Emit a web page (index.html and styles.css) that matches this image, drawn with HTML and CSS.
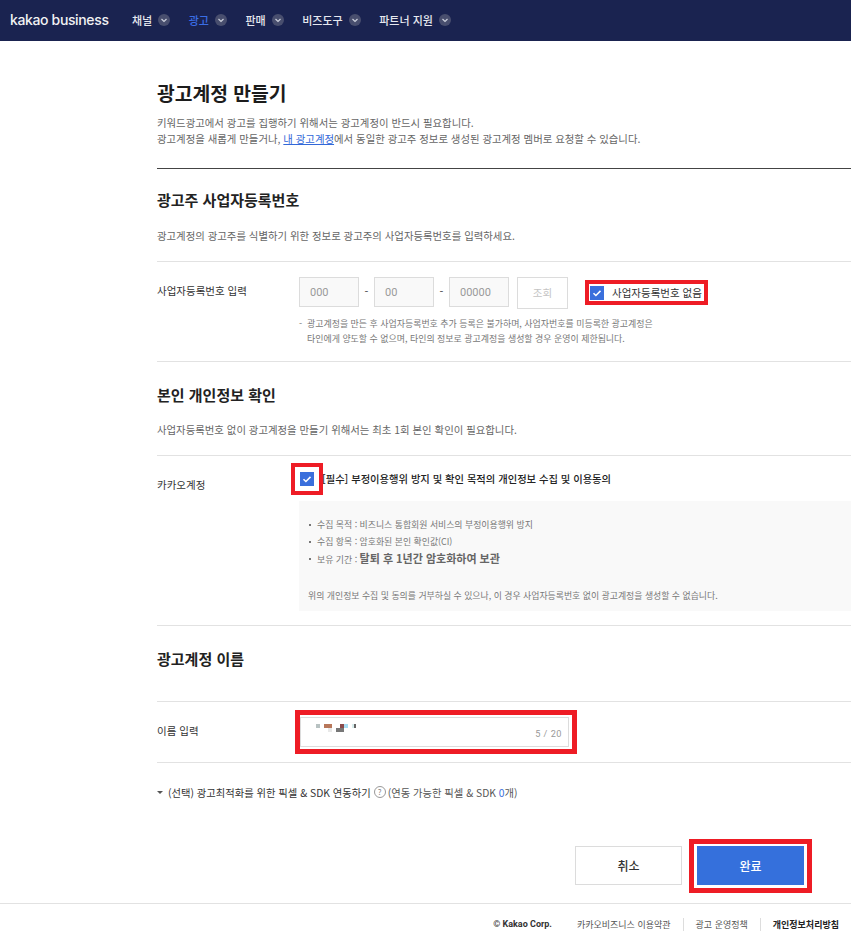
FILE: index.html
```html
<!DOCTYPE html>
<html lang="ko">
<head>
    <meta charset="UTF-8">
    <title>광고계정 만들기</title>
    <link rel="stylesheet" href="styles.css">
</head>
<body>
    <header class="gnb">
        <span class="logo">kakao business</span>
        <nav class="gnb-menu">
            <a class="gnb-item">채널<i class="arrow"><svg viewBox="0 0 12 12"><path d="M3.500 5l2.500 2.500L8.500 5"/></svg></i></a>
            <a class="gnb-item on">광고<i class="arrow"><svg viewBox="0 0 12 12"><path d="M3.500 5l2.500 2.500L8.500 5"/></svg></i></a>
            <a class="gnb-item">판매<i class="arrow"><svg viewBox="0 0 12 12"><path d="M3.500 5l2.500 2.500L8.500 5"/></svg></i></a>
            <a class="gnb-item">비즈도구<i class="arrow"><svg viewBox="0 0 12 12"><path d="M3.500 5l2.500 2.500L8.500 5"/></svg></i></a>
            <a class="gnb-item">파트너 지원<i class="arrow"><svg viewBox="0 0 12 12"><path d="M3.500 5l2.500 2.500L8.500 5"/></svg></i></a>
        </nav>
    </header>

    <main class="content">
        <div class="intro">
            <h1>광고계정 만들기</h1>
            <p>키워드광고에서 광고를 집행하기 위해서는 광고계정이 반드시 필요합니다.<br>광고계정을 새롭게 만들거나, <a class="link">내 광고계정</a>에서 동일한 광고주 정보로 생성된 광고계정 멤버로 요청할 수 있습니다.</p>
        </div>

        <!-- 사업자등록번호 -->
        <section class="sec-head sec-first">
            <h2>광고주 사업자등록번호</h2>
            <p>광고계정의 광고주를 식별하기 위한 정보로 광고주의 사업자등록번호를 입력하세요.</p>
        </section>
        <div class="row row-biz">
            <div class="row-label">사업자등록번호 입력</div>
            <div class="row-body">
                <div class="biz-line">
                    <span class="biz-input w60">000</span><span class="dash">-</span>
                    <span class="biz-input w60">00</span><span class="dash">-</span>
                    <span class="biz-input w60">00000</span>
                    <span class="biz-btn">조회</span>
                    <label class="mark mark-biz">
                        <i class="check"><svg viewBox="0 0 14 14"><path d="M3.500 7.200l2.400 2.300 4.600-4.600"/></svg></i>
                        <span>사업자등록번호 없음</span>
                    </label>
                </div>
                <p class="biz-note">광고계정을 만든 후 사업자등록번호 추가 등록은 불가하며, 사업자번호를 미등록한 광고계정은<br>타인에게 양도할 수 없으며, 타인의 정보로 광고계정을 생성할 경우 운영이 제한됩니다.</p>
            </div>
        </div>

        <!-- 본인 확인 -->
        <section class="sec-head">
            <h2>본인 개인정보 확인</h2>
            <p>사업자등록번호 없이 광고계정을 만들기 위해서는 최초 1회 본인 확인이 필요합니다.</p>
        </section>
        <div class="row row-agree">
            <div class="row-label label-agree">카카오계정</div>
            <div class="row-body">
                <div class="agree-line">
                    <span class="mark mark-agree"><i class="check"><svg viewBox="0 0 14 14"><path d="M3.500 7.200l2.400 2.300 4.600-4.600"/></svg></i></span>
                    <strong>[필수] 부정이용행위 방지 및 확인 목적의 개인정보 수집 및 이용동의</strong>
                </div>
                <div class="agree-box">
                    <ul>
                        <li>수집 목적 : 비즈니스 통합회원 서비스의 부정이용행위 방지</li>
                        <li>수집 항목 : 암호화된 본인 확인값(CI)</li>
                        <li>보유 기간 : <b>탈퇴 후 1년간 암호화하여 보관</b></li>
                    </ul>
                    <p>위의 개인정보 수집 및 동의를 거부하실 수 있으나, 이 경우 사업자등록번호 없이 광고계정을 생성할 수 없습니다.</p>
                </div>
            </div>
        </div>

        <!-- 계정 이름 -->
        <section class="sec-head sec-name">
            <h2>광고계정 이름</h2>
        </section>
        <div class="row row-name">
            <div class="row-label label-name">이름 입력</div>
            <div class="row-body">
                <div class="mark mark-name">
                    <div class="name-input">
                        <span class="blur"><i class="b1"></i><i class="b2"></i><i class="b3"></i><i class="b4"></i><i class="b5"></i><i class="b6"></i><i class="b7"></i><i class="b8"></i></span>
                        <span class="count">5 / 20</span>
                    </div>
                </div>
            </div>
        </div>

        <div class="pixel">
            <i class="tri"></i>
            <span>(선택) 광고최적화를 위한 픽셀 &amp; SDK 연동하기</span>
            <i class="help">?</i>
            <span class="pixel-sub">(연동 가능한 픽셀 &amp; SDK <em>0</em>개)</span>
        </div>

        <div class="btns">
            <button class="btn">취소</button>
            <span class="mark mark-done"><button class="btn btn-done">완료</button></span>
        </div>
    </main>

    <footer class="foot">
        <span class="copy">© Kakao Corp.</span>
        <a>카카오비즈니스 이용약관</a>
        <a class="sep">광고 운영정책</a>
        <a class="sep strong">개인정보처리방침</a>
    </footer>
</body>
</html>
```

FILE: styles.css
```css
* {
    box-sizing: border-box;
}

body {
    margin: 0;
    font-family: "Noto Sans CJK KR", "Noto Sans", sans-serif;
    color: #222;
    background: #fff;
}

h1, h2, p, ul {
    margin: 0;
    padding: 0;
}

/* Top bar */
.gnb {
    display: flex;
    align-items: center;
    height: 41px;
    padding-left: 10px;
    padding-bottom: 2px;
    background: #1a2350;
    color: #e6e8ef;
}

.logo {
    width: 122px;
    font-family: Inter, sans-serif;
    font-size: 14px;
    font-weight: 500;
    letter-spacing: -0.36px;
    color: #f1f1f3;
}

.gnb-menu {
    display: flex;
    gap: 18.5px;
}

.gnb-item {
    display: flex;
    align-items: center;
    gap: 6px;
    font-size: 11px;
    font-weight: 500;
}

.gnb-item.on {
    color: #3a6ee6;
}

.arrow {
    width: 12px;
    height: 12px;
    border-radius: 50%;
    background: #484e6e;
}

.arrow svg {
    display: block;
    fill: none;
    stroke: #ccd0dc;
    stroke-width: 1.2;
}

/* Page body */
.content {
    padding-left: 157px;
}

.intro {
    height: 128px;
    padding-top: 39px;
    border-bottom: 1px solid #444;
}

.intro h1 {
    font-size: 19.3px;
    line-height: 26px;
    font-weight: 700;
    color: #1c1c1c;
}

.intro p {
    margin-top: 9px;
    font-size: 10.4px;
    line-height: 16px;
    color: #666;
}

.link {
    color: #3268d8;
    text-decoration: underline;
}

.sec-head {
    height: 94px;
    padding-top: 23px;
    border-bottom: 1px solid #e2e2e2;
}

.sec-first {
    height: 93px;
    padding-top: 21px;
}

.sec-head h2 {
    font-size: 15px;
    line-height: 20px;
    font-weight: 700;
    color: #222;
}

.sec-head p {
    margin-top: 17px;
    font-size: 10.4px;
    line-height: 16px;
    color: #666;
}

.sec-first p {
    margin-top: 18px;
}

.sec-name {
    height: 76px;
}

.row {
    display: flex;
    border-bottom: 1px solid #e2e2e2;
}

.row-label {
    width: 142px;
    flex: none;
    font-size: 10.5px;
    line-height: 16px;
    color: #333;
}

.row-body {
    flex: 1;
    min-width: 0;
}

/* Business number row */
.row-biz {
    height: 100px;
    padding-top: 15px;
}

.row-biz .row-label {
    padding-top: 6px;
}

.biz-line {
    display: flex;
    align-items: flex-start;
    height: 30px;
}

.biz-input {
    height: 30px;
    padding-left: 10px;
    border: 1px solid #dcdcdc;
    background: #f9f9f9;
    font-family: Roboto, sans-serif;
    font-size: 11px;
    line-height: 29px;
    color: #999;
}

.w60 {
    width: 60px;
}

.dash {
    width: 15px;
    text-align: center;
    font-size: 11px;
    line-height: 28px;
    color: #444;
}

.biz-btn {
    width: 51px;
    height: 32px;
    margin-left: 8px;
    border: 1px solid #dcdcdc;
    text-align: center;
    font-size: 10.5px;
    line-height: 30px;
    color: #c4c4c4;
}

.mark {
    border: 4px solid #ee1c25;
    background: #fff;
}

.mark-biz {
    display: flex;
    align-items: center;
    gap: 8px;
    width: 123px;
    height: 25px;
    margin-top: 3px;
    margin-left: 17px;
    padding-left: 1px;
    font-size: 10.5px;
    color: #333;
}

.check {
    display: block;
    width: 14px;
    height: 14px;
    flex: none;
    background: #3a6fdc;
}

.check svg {
    display: block;
    fill: none;
    stroke: #fff;
    stroke-width: 1.5;
}

.biz-note {
    position: relative;
    margin-top: 10px;
    padding-left: 8px;
    font-size: 8.95px;
    line-height: 14.5px;
    color: #777;
}

.biz-note::before {
    content: "-";
    position: absolute;
    left: 0;
    top: 0;
}

/* Agreement row */
.row-agree {
    height: 170px;
}

.label-agree {
    padding-top: 21px;
}

.agree-line {
    display: flex;
    align-items: center;
    height: 45px;
    margin-left: -8px;
    font-size: 10.3px;
    color: #222;
}

.agree-line strong {
    padding-bottom: 1px;
    margin-left: -1px;
    font-weight: 500;
}

.mark-agree {
    display: flex;
    align-items: center;
    justify-content: center;
    width: 32px;
    height: 32px;
    margin-top: 1px;
    flex: none;
}

.agree-box {
    height: 110px;
    padding: 15px 9px 0 9px;
    background: #f9f9f9;
    font-size: 8.9px;
    color: #777;
    white-space: nowrap;
    overflow: hidden;
}

.agree-box ul {
    list-style: none;
}

.agree-box li {
    position: relative;
    padding-left: 9px;
    line-height: 17px;
}

.agree-box li::before {
    content: "";
    position: absolute;
    left: 1px;
    top: 8px;
    width: 2px;
    height: 2px;
    background: #777;
}

.agree-box b {
    font-size: 11px;
    font-weight: 700;
    color: #666;
}

.agree-box p {
    margin-top: 20px;
    line-height: 16px;
}

/* Name row */
.row-name {
    height: 61px;
}

.label-name {
    padding-top: 21px;
}

.mark-name {
    width: 282px;
    height: 44px;
    margin-top: 8px;
    margin-left: -4px;
    padding: 2px 3px 2px 0;
    border-width: 5px;
}

.name-input {
    position: relative;
    height: 100%;
    border: 1px solid #dcdcdc;
}

.blur {
    position: absolute;
    left: 15px;
    top: 4px;
    width: 45px;
    height: 12px;
}

.blur i {
    position: absolute;
    display: block;
}

.b1 { left: 0; top: 2px; width: 4px; height: 4px; background: #b8c2c2; }
.b2 { left: 8px; top: 2px; width: 8px; height: 4px; background: #b8775a; }
.b3 { left: 12px; top: 6px; width: 4px; height: 4px; background: #e8e8e8; }
.b4 { left: 20px; top: 6px; width: 8px; height: 4px; background: #777; }
.b5 { left: 24px; top: 2px; width: 4px; height: 4px; background: #8a4a4a; }
.b6 { left: 28px; top: 2px; width: 4px; height: 4px; background: #a8dcf2; }
.b7 { left: 36px; top: 2px; width: 2px; height: 4px; background: #d8ecec; }
.b8 { left: 38px; top: 2px; width: 2px; height: 4px; background: #666; }

.count {
    position: absolute;
    right: 6px;
    top: 10px;
    font-family: Roboto, sans-serif;
    font-size: 9.2px;
    letter-spacing: 0.5px;
    color: #999;
}

/* Pixel toggle */
.pixel {
    display: flex;
    align-items: center;
    height: 16px;
    margin-top: 21px;
    font-size: 10.3px;
    color: #333;
}

.tri {
    width: 0;
    height: 0;
    margin-right: 5px;
    border: 3px solid transparent;
    border-top: 3px solid #555;
    border-bottom: 0;
}

.help {
    width: 12px;
    height: 12px;
    margin: 0 2px 0 3px;
    border: 1px solid #999;
    border-radius: 50%;
    text-align: center;
    font-size: 8px;
    font-style: normal;
    line-height: 10px;
    color: #888;
}

.pixel-sub {
    color: #555;
}

.pixel-sub em {
    font-style: normal;
    color: #3a6fdc;
}

/* Buttons */
.btns {
    display: flex;
    justify-content: flex-end;
    align-items: flex-start;
    gap: 7px;
    height: 54px;
    margin-top: 39px;
    padding-right: 39px;
}

.btn {
    width: 107px;
    height: 39px;
    margin-top: 7px;
    border: 1px solid #dcdcdc;
    background: #fff;
    font-family: inherit;
    font-size: 12px;
    font-weight: 500;
    color: #333;
}

.mark-done {
    display: block;
    padding: 2px 3px;
    border-width: 5px;
    height: 54px;
}

.btn-done {
    display: block;
    margin-top: 0;
    border: 0;
    background: #3570dc;
    color: #fff;
}

/* Footer */
.foot {
    display: flex;
    justify-content: flex-end;
    align-items: center;
    height: 37px;
    margin-top: 10px;
    padding-top: 4px;
    padding-right: 12px;
    border-top: 1px solid #e2e2e2;
    font-size: 9px;
    color: #555;
}

.copy {
    margin-right: 25px;
    font-family: Roboto, sans-serif;
    font-weight: 700;
    color: #333;
}

.sep {
    margin-left: 12px;
    padding-left: 12px;
    border-left: 1px solid #ddd;
}

.strong {
    font-weight: 700;
    color: #222;
}
```
